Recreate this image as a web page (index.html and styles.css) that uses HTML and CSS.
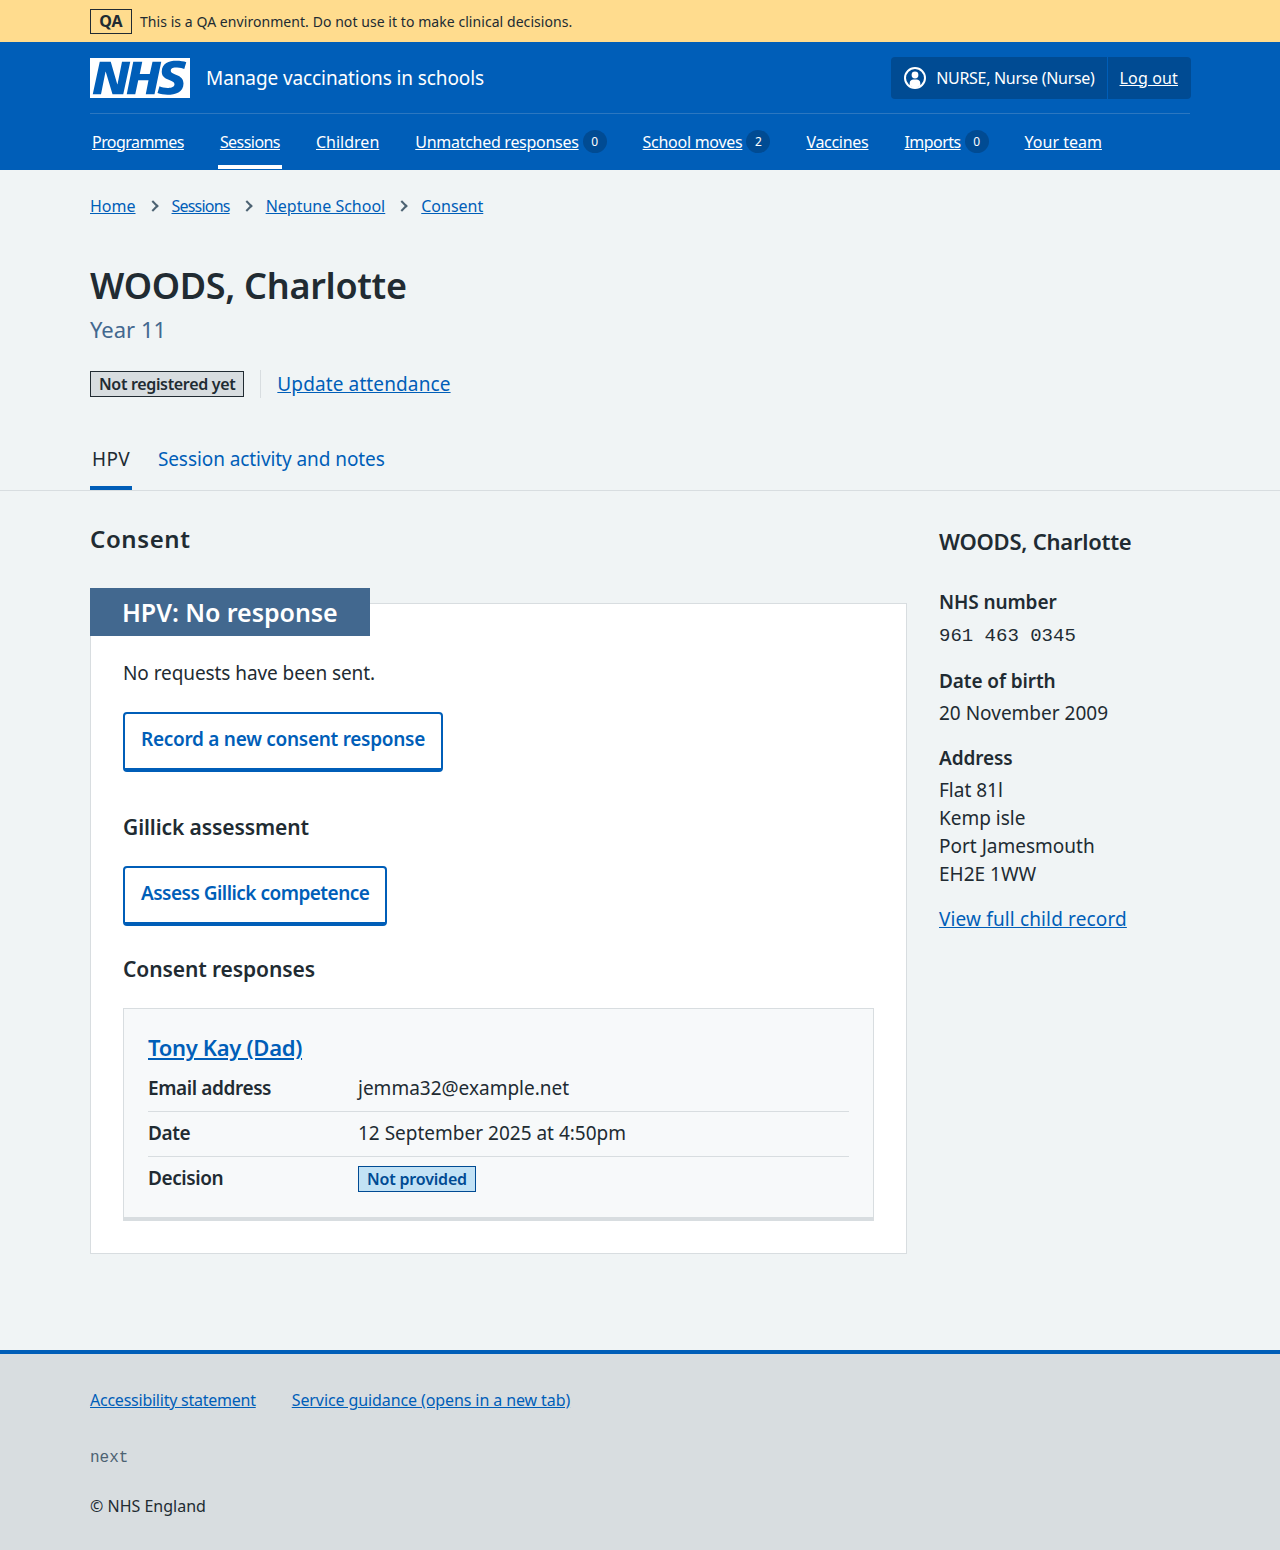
FILE: index.html
```html
<!DOCTYPE html>
<html lang="en">
<head>
    <meta charset="UTF-8">
    <title>WOODS, Charlotte - Manage vaccinations in schools</title>
    <link rel="stylesheet" href="styles.css">
</head>
<body>
    <div class="env-banner">
        <div class="container env-banner-inner">
            <strong class="env-tag">QA</strong>
            <span class="env-text">This is a QA environment. Do not use it to make clinical decisions.</span>
        </div>
    </div>

    <header class="header">
        <div class="container">
            <div class="header-top">
                <a class="logo" href="#">
                    <svg class="logo-svg" viewBox="0 0 40 16" width="100" height="40" role="img" aria-label="NHS">
                        <path fill="#fff" d="M0 0h40v16H0z"></path>
                        <path fill="#005eb8" d="M3.9 1.5h4.4l2.6 9h.1l1.8-9h3.3l-2.8 13H9l-2.7-9h-.1l-1.8 9H1.1M17.3 1.5h3.6l-1 4.9h4L25 1.5h3.5l-2.7 13h-3.5l1.1-5.6h-4.1l-1.2 5.6h-3.4M37.7 4.4c-.7-.3-1.6-.6-2.9-.6-1.4 0-2.5.2-2.5 1.3 0 1.8 5.1 1.2 5.1 5.1 0 3.6-3.3 4.5-6.4 4.5-1.3 0-2.9-.3-4-.7l.8-2.7c.7.4 2.1.7 3.2.7s2.8-.2 2.8-1.5c0-2.1-5.1-1.3-5.1-5 0-3.4 2.9-4.4 5.8-4.4 1.6 0 3.1.2 4 .6"></path>
                    </svg>
                    <span class="service-name">Manage vaccinations in schools</span>
                </a>
                <div class="account">
                    <div class="account-user">
                        <svg class="account-icon" viewBox="0 0 24 24" width="24" height="24" aria-hidden="true">
                            <circle cx="12" cy="12" r="10" fill="none" stroke="#fff" stroke-width="2"></circle>
                            <circle cx="12" cy="9" r="3.4" fill="#fff"></circle>
                            <path fill="#fff" d="M6.7 19.4v-2.2c0-2.3 1.8-3.6 3.6-3.6h3.4c1.8 0 3.6 1.3 3.6 3.6v2.2a9 9 0 0 1-10.6 0z"></path>
                        </svg>
                        <span class="account-name">NURSE, Nurse (Nurse)</span>
                    </div>
                    <a class="account-link" href="#">Log out</a>
                </div>
            </div>
            <nav class="nav">
                <a class="nav-item" href="#"><span class="nav-text narrow">Programmes</span></a>
                <a class="nav-item nav-current" href="#"><span class="nav-text narrow">Sessions</span></a>
                <a class="nav-item" href="#"><span class="nav-text wide">Children</span></a>
                <a class="nav-item" href="#"><span class="nav-text">Unmatched responses</span><span class="count">0</span></a>
                <a class="nav-item" href="#"><span class="nav-text">School moves</span><span class="count">2</span></a>
                <a class="nav-item" href="#"><span class="nav-text">Vaccines</span></a>
                <a class="nav-item" href="#"><span class="nav-text narrow">Imports</span><span class="count">0</span></a>
                <a class="nav-item" href="#"><span class="nav-text wide">Your team</span></a>
            </nav>
        </div>
    </header>

    <div class="container">
        <ol class="breadcrumb">
            <li><a href="#">Home</a></li>
            <li><a class="narrow" href="#">Sessions</a></li>
            <li><a href="#">Neptune School</a></li>
            <li><a href="#">Consent</a></li>
        </ol>

        <h1 class="title">WOODS, Charlotte</h1>
        <p class="caption">Year 11</p>

        <div class="attendance">
            <strong class="tag tag-grey">Not registered yet</strong>
            <a class="attendance-link" href="#">Update attendance</a>
        </div>
    </div>

    <div class="tabs">
        <div class="container tabs-inner">
            <span class="tab tab-current">HPV</span>
            <a class="tab" href="#">Session activity and notes</a>
        </div>
    </div>

    <main class="container columns">
        <div class="col-main">
            <h2 class="section-title">Consent</h2>

            <section class="card">
                <h3 class="card-heading">HPV: No response</h3>
                <div class="card-body">
                    <p class="text">No requests have been sent.</p>
                    <a class="button" href="#">Record a new consent response</a>

                    <h4 class="sub-title sub-gillick">Gillick assessment</h4>
                    <a class="button button-tight" href="#">Assess Gillick competence</a>

                    <h4 class="sub-title sub-responses">Consent responses</h4>
                    <div class="response">
                        <h5 class="response-title"><a href="#">Tony Kay (Dad)</a></h5>
                        <dl class="summary">
                            <div class="summary-row">
                                <dt>Email address</dt>
                                <dd>jemma32@example.net</dd>
                            </div>
                            <div class="summary-row">
                                <dt>Date</dt>
                                <dd>12 September 2025 at 4:50pm</dd>
                            </div>
                            <div class="summary-row summary-last">
                                <dt>Decision</dt>
                                <dd><strong class="tag tag-blue">Not provided</strong></dd>
                            </div>
                        </dl>
                    </div>
                </div>
            </section>
        </div>

        <aside class="col-side">
            <h2 class="side-name">WOODS, Charlotte</h2>
            <h3 class="side-label">NHS number</h3>
            <p class="side-value side-mono">961 463 0345</p>
            <h3 class="side-label">Date of birth</h3>
            <p class="side-value">20 November 2009</p>
            <h3 class="side-label">Address</h3>
            <p class="side-value">Flat 81l<br>Kemp isle<br>Port Jamesmouth<br>EH2E 1WW</p>
            <a class="side-link" href="#">View full child record</a>
        </aside>
    </main>

    <footer class="footer">
        <div class="container">
            <ul class="footer-links">
                <li><a href="#">Accessibility statement</a></li>
                <li><a href="#">Service guidance (opens in a new tab)</a></li>
            </ul>
            <p class="footer-version">next</p>
            <p class="footer-copy">© NHS England</p>
        </div>
    </footer>
</body>
</html>
```

FILE: styles.css
```css
* {
    box-sizing: border-box;
}
body {
    margin: 0;
    font-family: "Noto Sans", Arial, sans-serif;
    font-size: 19px;
    line-height: 28px;
    color: #212b32;
    background-color: #f0f4f5;
}
a {
    color: #005eb8;
}
h1, h2, h3, h4, h5, p, dl, dd, ol, ul {
    margin: 0;
    padding: 0;
}
.container {
    width: 1100px;
    margin: 0 auto;
}

/* environment banner */
.env-banner {
    height: 42px;
    background-color: #ffdc8e;
    font-size: 14px;
}
.env-banner-inner {
    display: flex;
    align-items: center;
    gap: 8px;
    height: 42px;
}
.env-text {
    margin-top: 2px;
    letter-spacing: 0.06px;
}
.env-tag {
    width: 42px;
    height: 25px;
    border: 1px solid #212b32;
    font-size: 16px;
    line-height: 23px;
    text-align: center;
}

/* header */
.header {
    height: 128px;
    background-color: #005eb8;
    color: #fff;
}
.header a {
    color: #fff;
}
.header-top {
    display: flex;
    justify-content: space-between;
    align-items: center;
    height: 72px;
    border-bottom: 1px solid #2c77c0;
}
.logo {
    display: flex;
    align-items: center;
    gap: 16px;
    text-decoration: none;
}
.logo-svg {
    display: block;
}
.service-name {
    font-size: 19px;
    letter-spacing: -0.1px;
}
.account {
    display: flex;
    height: 42px;
    margin-right: -1px;
    background-color: #004b93;
    border-radius: 4px;
    font-size: 16px;
}
.account-user {
    display: flex;
    align-items: center;
    gap: 9px;
    padding: 0 12px;
}
.account-name {
    letter-spacing: -0.3px;
}
.account-link {
    display: flex;
    align-items: center;
    padding: 0 13px 0 12px;
    border-left: 1px solid #005eb8;
    letter-spacing: 0.15px;
}
.nav {
    display: flex;
    gap: 32px;
    height: 55px;
    font-size: 16px;
}
.nav-item {
    display: flex;
    align-items: center;
    gap: 4px;
    height: 55px;
    padding: 4px 2px 0;
    text-decoration: none;
    border-bottom: 4px solid transparent;
}
.nav-text {
    letter-spacing: -0.28px;
    text-decoration: underline;
}
.nav-text.wide {
    letter-spacing: 0;
}
.nav-text.narrow {
    letter-spacing: -0.55px;
}
.nav-current {
    border-bottom-color: #fff;
}
.count {
    width: 24px;
    height: 23px;
    border-radius: 50%;
    background-color: #004b93;
    font-size: 12px;
    line-height: 23px;
    text-align: center;
}

/* breadcrumb and page heading */
.breadcrumb {
    display: flex;
    padding-top: 22px;
    list-style: none;
    font-size: 16px;
    line-height: 28px;
}
.breadcrumb li {
    display: flex;
    align-items: center;
}
.breadcrumb li + li::before {
    content: "";
    width: 6px;
    height: 6px;
    margin: 0 15px 0 13px;
    border-top: 2px solid #4c6272;
    border-right: 2px solid #4c6272;
    transform: rotate(45deg);
}
.breadcrumb .narrow {
    letter-spacing: -0.8px;
}
.title {
    margin-top: 42px;
    font-size: 36px;
    line-height: 48px;
    font-weight: 600;
    letter-spacing: -0.3px;
}
.caption {
    margin-top: 4px;
    font-size: 22px;
    line-height: 30px;
    color: #42688f;
}
.attendance {
    display: flex;
    align-items: center;
    margin-top: 27px;
    height: 26px;
}
.tag {
    display: inline-block;
    height: 26px;
    padding: 0 8px;
    border: 1px solid;
    font-size: 16px;
    line-height: 24px;
    font-weight: 600;
}
.tag-grey {
    color: #212b32;
    background-color: #d8dde0;
    border-color: #212b32;
    letter-spacing: -0.33px;
}
.tag-blue {
    color: #004b93;
    background-color: #c2e2f5;
    border-color: #004b93;
    letter-spacing: -0.18px;
}
.attendance-link {
    margin-left: 16px;
    padding-left: 16px;
    border-left: 1px solid #d8dde0;
    letter-spacing: 0.12px;
}

/* tabs */
.tabs {
    margin-top: 39px;
    border-bottom: 1px solid #d8dde0;
}
.tabs-inner {
    display: flex;
    gap: 24px;
    height: 54px;
}
.tab {
    display: block;
    height: 54px;
    padding: 9px 2px 0;
    letter-spacing: -0.08px;
    text-decoration: none;
}
.tab-current {
    border-bottom: 4px solid #005eb8;
    letter-spacing: 0.3px;
}

/* main columns */
.columns {
    display: flex;
    gap: 32px;
    padding-top: 32px;
    padding-bottom: 96px;
    align-items: flex-start;
}
.col-main {
    width: 817px;
}
.col-side {
    width: 251px;
}
.section-title {
    font-size: 24px;
    line-height: 32px;
    font-weight: 600;
    letter-spacing: 0.6px;
}
.card {
    position: relative;
    margin-top: 48px;
    background-color: #fff;
    border: 1px solid #d8dde0;
}
.card-heading {
    position: absolute;
    top: -16px;
    left: -1px;
    height: 48px;
    padding: 0 32px;
    background-color: #42688f;
    color: #fff;
    font-size: 25px;
    line-height: 48px;
    font-weight: 600;
    letter-spacing: -0.05px;
}
.card-body {
    padding: 55px 32px 32px;
}
.text {
    letter-spacing: -0.08px;
}
.button {
    display: block;
    width: fit-content;
    height: 60px;
    margin-top: 25px;
    padding: 0 16px;
    background-color: #fff;
    border: 2px solid #005eb8;
    border-bottom-width: 4px;
    border-radius: 4px;
    font-weight: 600;
    line-height: 51px;
    letter-spacing: -0.28px;
    text-decoration: none;
}
.button-tight {
    margin-top: 24px;
    letter-spacing: -0.52px;
}
.sub-title {
    font-size: 21px;
    line-height: 30px;
    font-weight: 600;
    letter-spacing: -0.1px;
}
.sub-gillick {
    margin-top: 40px;
}
.sub-responses {
    margin-top: 28px;
}
.response {
    margin-top: 24px;
    padding: 23px 24px 15px;
    background-color: #f7f9fa;
    border: 1px solid #d8dde0;
    border-bottom: 4px solid #d8dde0;
}
.response-title {
    margin-bottom: 5px;
    font-size: 22px;
    line-height: 30px;
    font-weight: 600;
    letter-spacing: -0.3px;
}
.summary-row {
    display: flex;
    height: 45px;
    padding-top: 7px;
    border-bottom: 1px solid #d8dde0;
}
.summary-last {
    border-bottom: 0;
}
.summary-row dt {
    width: 210px;
    font-weight: 600;
    letter-spacing: -0.4px;
}
.summary-row dd {
    flex: 1;
}

/* side column */
.side-name {
    margin-top: 3px;
    font-size: 22px;
    line-height: 30px;
    font-weight: 600;
    letter-spacing: -0.25px;
}
.side-label {
    font-size: 19px;
    line-height: 28px;
    font-weight: 600;
    letter-spacing: -0.1px;
}
.side-name + .side-label {
    margin-top: 32px;
}
.side-value {
    margin-top: 4px;
}
.side-mono {
    margin-top: 6px;
    font-family: "Liberation Mono", monospace;
    font-size: 19px;
}
.side-value + .side-label {
    margin-top: 17px;
}
.side-link {
    display: block;
    margin-top: 17px;
    letter-spacing: 0.14px;
}

/* footer */
.footer {
    height: 200px;
    padding-top: 32px;
    background-color: #d8dde0;
    border-top: 4px solid #005eb8;
    font-size: 16px;
}
.footer-links {
    display: flex;
    gap: 36px;
    list-style: none;
    letter-spacing: -0.1px;
}
.footer-links li:first-child {
    letter-spacing: -0.24px;
}
.footer-version {
    margin-top: 30px;
    font-family: "Liberation Mono", monospace;
    color: #4c6272;
}
.footer-copy {
    margin-top: 20px;
}
```
